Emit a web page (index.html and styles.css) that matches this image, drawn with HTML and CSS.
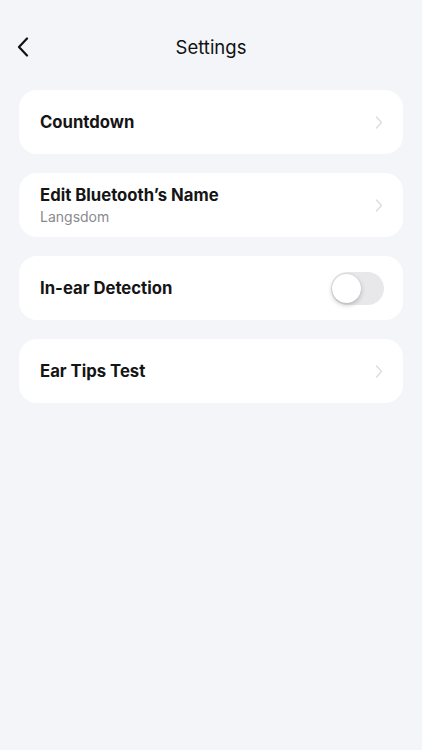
FILE: index.html
```html
<!DOCTYPE html>
<html lang="en">
<head>
    <meta charset="UTF-8">
    <meta name="viewport" content="width=device-width, initial-scale=1.0">
    <title>Settings</title>
    <link rel="stylesheet" href="styles.css">
</head>
<body>

<header class="topbar">
    <a href="#" class="back">
        <svg width="12" height="20" viewBox="0 0 12 20"><path d="M10 1.5 L2 10 L10 18.5" fill="none" stroke="#111" stroke-width="2.2" stroke-linecap="round" stroke-linejoin="round"/></svg>
    </a>
    <h1>Settings</h1>
</header>

<main class="list">
    <a href="#" class="card">
        <div class="label">
            <span class="title">Countdown</span>
        </div>
        <svg class="arrow" width="8" height="13" viewBox="0 0 8 13"><path d="M1.5 1 L6.5 6.5 L1.5 12" fill="none" stroke="#dcdcde" stroke-width="1.3" stroke-linecap="round" stroke-linejoin="round"/></svg>
    </a>

    <a href="#" class="card">
        <div class="label">
            <span class="title">Edit Bluetooth’s Name</span>
            <span class="sub">Langsdom</span>
        </div>
        <svg class="arrow" width="8" height="13" viewBox="0 0 8 13"><path d="M1.5 1 L6.5 6.5 L1.5 12" fill="none" stroke="#dcdcde" stroke-width="1.3" stroke-linecap="round" stroke-linejoin="round"/></svg>
    </a>

    <div class="card">
        <div class="label">
            <span class="title">In-ear Detection</span>
        </div>
        <span class="switch"><span class="knob"></span></span>
    </div>

    <a href="#" class="card">
        <div class="label">
            <span class="title">Ear Tips Test</span>
        </div>
        <svg class="arrow" width="8" height="13" viewBox="0 0 8 13"><path d="M1.5 1 L6.5 6.5 L1.5 12" fill="none" stroke="#dcdcde" stroke-width="1.3" stroke-linecap="round" stroke-linejoin="round"/></svg>
    </a>
</main>

</body>
</html>
```

FILE: styles.css
```css
/* Pantalla de ajustes */
body {
    font-family: Inter, "Noto Sans", sans-serif;
    margin: 0;
    padding: 0;
    background-color: #f4f5f9;
    color: #111;
}
.topbar {
    position: relative;
    height: 38px;
    margin-top: 28px;
    display: flex;
    align-items: center;
    justify-content: center;
}
.topbar h1 {
    margin: 0;
    font-size: 18.5px;
    font-weight: 400;
    color: #111;
}
.back {
    position: absolute;
    left: 17px;
    top: 9px;
    display: flex;
}
.list {
    display: flex;
    flex-direction: column;
    gap: 19px;
    padding: 24px 19px 0;
}
.card {
    display: flex;
    align-items: center;
    justify-content: space-between;
    height: 64px;
    padding: 0 21px;
    background-color: #fff;
    border-radius: 18px;
    text-decoration: none;
    color: inherit;
}
.label {
    display: flex;
    flex-direction: column;
    gap: 3px;
}
.title {
    font-size: 16.7px;
    font-weight: 700;
    color: #151515;
}
.sub {
    font-size: 14px;
    color: #8a8a8e;
}
.arrow {
    margin-right: -1px;
}
.switch {
    position: relative;
    width: 53px;
    height: 33px;
    border-radius: 17px;
    background-color: #e8e8ea;
    margin-right: -2px;
}
.knob {
    position: absolute;
    left: 1px;
    top: 2px;
    width: 29px;
    height: 29px;
    border-radius: 50%;
    background-color: #fff;
    box-shadow: 0 2px 5px rgba(0, 0, 0, 0.22), 0 0 1px rgba(0, 0, 0, 0.15);
}
```
